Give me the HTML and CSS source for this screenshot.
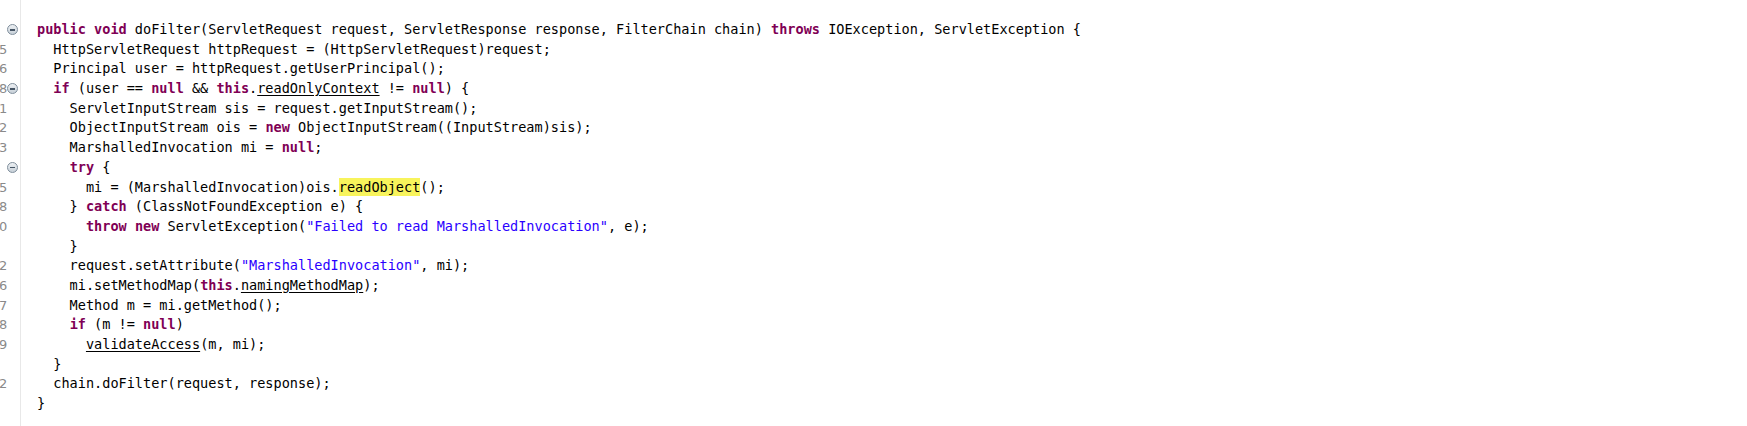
FILE: index.html
```html
<!DOCTYPE html>
<html>
<head>
<meta charset="utf-8">
<link rel="stylesheet" href="styles.css">
</head>
<body>
<div class="editor">
  <div class="gutter">
    <div class="row"><span class="num"></span><span class="fold"></span></div>
    <div class="row"><span class="num">5</span></div>
    <div class="row"><span class="num">6</span></div>
    <div class="row"><span class="num">8</span><span class="fold"></span></div>
    <div class="row"><span class="num">1</span></div>
    <div class="row"><span class="num">2</span></div>
    <div class="row"><span class="num">3</span></div>
    <div class="row"><span class="num"></span><span class="fold"></span></div>
    <div class="row"><span class="num">5</span></div>
    <div class="row"><span class="num">8</span></div>
    <div class="row"><span class="num">0</span></div>
    <div class="row"><span class="num"></span></div>
    <div class="row"><span class="num">2</span></div>
    <div class="row"><span class="num">6</span></div>
    <div class="row"><span class="num">7</span></div>
    <div class="row"><span class="num">8</span></div>
    <div class="row"><span class="num">9</span></div>
    <div class="row"><span class="num"></span></div>
    <div class="row"><span class="num">2</span></div>
    <div class="row"><span class="num"></span></div>
  </div>
  <div class="code">
<div class="line"><span class="kw">public</span> <span class="kw">void</span> doFilter(ServletRequest request, ServletResponse response, FilterChain chain) <span class="kw">throws</span> IOException, ServletException {</div>
<div class="line">  HttpServletRequest httpRequest = (HttpServletRequest)request;</div>
<div class="line">  Principal user = httpRequest.getUserPrincipal();</div>
<div class="line">  <span class="kw">if</span> (user == <span class="kw">null</span> &amp;&amp; <span class="kw">this</span>.<span class="ul">readOnlyContext</span> != <span class="kw">null</span>) {</div>
<div class="line">    ServletInputStream sis = request.getInputStream();</div>
<div class="line">    ObjectInputStream ois = <span class="kw">new</span> ObjectInputStream((InputStream)sis);</div>
<div class="line">    MarshalledInvocation mi = <span class="kw">null</span>;</div>
<div class="line">    <span class="kw">try</span> {</div>
<div class="line">      mi = (MarshalledInvocation)ois.<span class="hl">readObject</span>();</div>
<div class="line">    } <span class="kw">catch</span> (ClassNotFoundException e) {</div>
<div class="line">      <span class="kw">throw</span> <span class="kw">new</span> ServletException(<span class="str">"Failed to read MarshalledInvocation"</span>, e);</div>
<div class="line">    }</div>
<div class="line">    request.setAttribute(<span class="str">"MarshalledInvocation"</span>, mi);</div>
<div class="line">    mi.setMethodMap(<span class="kw">this</span>.<span class="ul">namingMethodMap</span>);</div>
<div class="line">    Method m = mi.getMethod();</div>
<div class="line">    <span class="kw">if</span> (m != <span class="kw">null</span>)</div>
<div class="line">      <span class="ul">validateAccess</span>(m, mi);</div>
<div class="line">  }</div>
<div class="line">  chain.doFilter(request, response);</div>
<div class="line">}</div>
  </div>
</div>
</body>
</html>
```

FILE: styles.css
```css
html, body {
  margin: 0;
  padding: 0;
  background: #ffffff;
}

.editor {
  display: flex;
  height: 426px;
  overflow: hidden;
  box-sizing: border-box;
}

.gutter {
  width: 20px;
  border-right: 1px solid #e8e8e8;
  padding-top: 20px;
  flex: none;
  overflow: hidden;
}

.row {
  height: 19.7px;
  display: flex;
  align-items: center;
}

.num {
  width: 8px;
  margin-left: -1px;
  flex: none;
  text-align: right;
  font-family: "DejaVu Sans", sans-serif;
  font-size: 13px;
  color: #8a8a8a;
  overflow: hidden;
  line-height: 19.7px;
}

.fold {
  position: relative;
  width: 9px;
  height: 9px;
  margin-left: -0.5px;
  flex: none;
  border: 1px solid #7f8e9c;
  border-radius: 50%;
  background: linear-gradient(#eef1f4, #c7d0d8);
}

.fold::after {
  content: "";
  position: absolute;
  left: 2px;
  top: 3.6px;
  width: 5px;
  height: 1.6px;
  background: #465565;
}

.code {
  padding-top: 20px;
  padding-left: 16px;
  font-family: "DejaVu Sans Mono", monospace;
  font-size: 13.55px;
  color: #000000;
}

.line {
  height: 19.7px;
  line-height: 19.7px;
  white-space: pre;
}

.kw {
  color: #7f0055;
  font-weight: bold;
}

.str {
  color: #2a00ff;
}

.ul {
  text-decoration: underline;
  text-underline-offset: 2px;
}

.hl {
  background: #f8f45c;
  padding: 1px 0;
}
```
